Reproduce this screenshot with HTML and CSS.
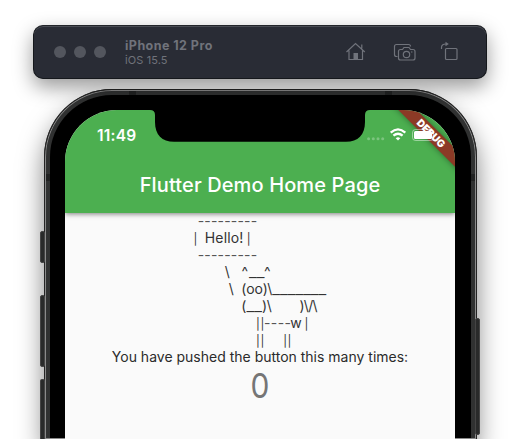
FILE: index.html
```html
<!DOCTYPE html>
<html lang="en">
<head>
<meta charset="utf-8">
<title>iPhone 12 Pro</title>
<link rel="stylesheet" href="styles.css">
</head>
<body>
<header class="toolbar">
  <div class="dots"><i></i><i></i><i></i></div>
  <div class="device"><strong>iPhone 12 Pro</strong><span>iOS 15.5</span></div>
  <svg class="tools" width="116" height="24" viewBox="344 38 116 24">
    <path d="M346.5 51 L355.5 42.5 L364.8 51 M349 49.5 V58.5 H362.5 V49.5 M361.8 47.5 V43.5"/>
    <path class="solid" d="M353.5 58.5v-6.5h4.5v6.5z"/>
    <path d="M397.5 55.5h-1a2 2 0 0 1-2-2v-8a2 2 0 0 1 2-2h12a2 2 0 0 1 2 2"/>
    <path d="M400.5 48.5h2l1.5-2h5l1.500 2h2.500a2 2 0 0 1 2 2v6.500a2 2 0 0 1-2 2h-12.500a2 2 0 0 1-2-2v-6.500a2 2 0 0 1 2-2z"/>
    <circle cx="406.500" cy="53.500" r="3.200"/>
    <circle class="solid" cx="411.800" cy="51" r=".7"/>
    <rect x="445.500" y="47.500" width="11.500" height="11" rx="1"/>
    <path d="M441.500 48v-1.500q0-3.500 4.500-3.500"/>
    <path class="solid" d="M445.500 40.800l3.300 2.200-3.300 2.200z"/>
  </svg>
</header>
<main class="phone">
  <i class="key mute"></i><i class="key up"></i><i class="key down"></i><i class="key power"></i>
  <i class="band top-left"></i><i class="band top-right"></i><i class="band side-left"></i><i class="band side-right"></i>
  <div class="screen">
    <div class="appbar">
      <div class="status">
        <span class="time">11:49</span>
        <svg width="70" height="16" viewBox="366 127 70 16">
          <g fill="#7cc47f"><circle cx="368.600" cy="138.700" r="1.500"/><circle cx="373.300" cy="138.700" r="1.500"/><circle cx="378" cy="138.700" r="1.500"/><circle cx="382.700" cy="138.700" r="1.500"/></g>
          <g fill="none" stroke="#fff" stroke-width="2.300"><path d="M390.700 132.700q7.300-6.600 14.600 0"/><path d="M393.400 135.700q4.600-4 9.200 0"/></g>
          <path fill="#fff" d="M395.700 138.200q2.300-1.900 4.600 0L398 140.500z"/>
          <rect x="412.500" y="129.500" width="21" height="11" rx="3" fill="none" stroke="#fff" stroke-opacity=".45"/>
          <rect x="414" y="131" width="18" height="8" rx="1.500" fill="#fff"/>
        </svg>
      </div>
      <h1>Flutter Demo Home Page</h1>
    </div>
    <svg class="cow" width="390" height="135" viewBox="65 213 390 135">
      <g class="dash">
        <text x="197.700" y="226" textLength="59.500">---------</text>
        <text x="197.700" y="260" textLength="59.500">---------</text>
        <text x="264" y="328" textLength="27">----</text>
      </g>
      <text x="204.800" y="243" textLength="38.500">Hello!</text>
      <text x="241.500" y="277">^</text><text x="249" y="277" textLength="15.500" lengthAdjust="spacingAndGlyphs">__</text><text x="264" y="277">^</text>
      <text x="241.300" y="294" textLength="26.500">(oo)</text><text x="272.300" y="294" textLength="54" lengthAdjust="spacingAndGlyphs">_______</text>
      <text x="241.300" y="311">(</text><text x="246.500" y="311" textLength="15.500" lengthAdjust="spacingAndGlyphs">__</text><text x="262" y="311">)</text><text x="299.500" y="311" textLength="18">)\/\</text>
      <text x="290.300" y="328">w</text>
      <text x="224.800" y="277">\</text><text x="228.800" y="294">\</text><text x="267.300" y="294">\</text><text x="266.800" y="311">\</text>
      <g class="bar">
        <text x="195.300" y="242.500">|</text><text x="248.700" y="242.500">|</text>
        <text x="258" y="327.500">|</text><text x="262.300" y="327.500">|</text><text x="306.500" y="327.500">|</text>
        <text x="258" y="344.500">|</text><text x="262.300" y="344.500">|</text><text x="285.100" y="344.500">|</text><text x="289.400" y="344.500">|</text>
      </g>
    </svg>
    <p class="caption">You have pushed the button this many times:</p>
    <p class="count">0</p>
    <div class="ribbon">DEBUG</div>
  </div>
  <svg class="notch" width="220" height="33" viewBox="150 109 220 33"><path d="M150 109V110Q155 110 155 115V122C155 135 162 141.700 174 141.700H346C358 141.700 365 135 365 122V115Q365 110 370 110V109z"/></svg>
</main>
</body>
</html>
```
FILE: styles.css
```css
* { box-sizing: border-box; }
html, body { height: 100%; }
body {
  margin: 0;
  padding-top: 25px;
  overflow: hidden;
  background: #fff;
  font-family: Inter, "Liberation Sans", sans-serif;
}
.toolbar {
  position: relative;
  z-index: 2;
  display: flex;
  align-items: center;
  width: 454px;
  height: 54px;
  margin-left: 33px;
  padding: 0 26px 0 20px;
  border: 1px solid #15181c;
  border-top-color: #22252a;
  border-radius: 10px;
  background: #292c35;
  box-shadow: inset 0 1px #4a4d54, 0 8px 20px rgba(0, 0, 0, .4);
  color: #70737b;
}
.dots { display: flex; gap: 8px; width: 71px; }
.dots i { width: 12px; height: 12px; border-radius: 50%; background: #53565e; }
.device { display: flex; flex-direction: column; flex: 1; }
.device strong { font-size: 12.500px; line-height: 15px; letter-spacing: .45px; }
.device span { font-size: 11px; line-height: 14px; letter-spacing: .1px; }
.tools { position: relative; top: -1px; fill: none; stroke: #70737b; stroke-width: 1.200; }
.tools .solid { fill: #70737b; stroke: none; }
.phone {
  position: relative;
  width: 433px;
  height: 350px;
  margin: 10px 0 0 44px;
  padding: 15px 15px 0;
  border: 6px solid #303131;
  border-bottom: 0;
  border-radius: 68px 68px 0 0;
  background: #000;
  box-shadow: 0 14px 26px rgba(0, 0, 0, .5);
}
.phone::before {
  content: "";
  position: absolute;
  inset: -6px -6px 0;
  border: 1px solid #242424;
  border-bottom: 0;
  border-radius: 68px 68px 0 0;
  box-shadow: inset 0 0 0 1px #8a8a8a;
}
.screen {
  position: relative;
  width: 390px;
  height: 329px;
  overflow: hidden;
  border-radius: 52px 52px 0 0;
  background: #fafafa;
}
.appbar {
  height: 103px;
  background: #4caf50;
  box-shadow: 0 1px 5px rgba(0, 0, 0, .5);
  color: #fff;
}
.status {
  display: flex;
  justify-content: space-between;
  height: 47px;
  padding: 17px 19px 0 32px;
}
.status svg { position: relative; z-index: 1; }
.time { font-size: 15.500px; font-weight: 600; line-height: 17px; letter-spacing: .2px; }
h1 {
  margin: 0;
  font-size: 20px;
  font-weight: 500;
  line-height: 56px;
  letter-spacing: .12px;
  text-align: center;
}
.cow { display: block; fill: #333; font-size: 14px; }
.dash { fill: #555; }
.bar { font-size: 11.500px; text-anchor: middle; }
.caption, .count { margin: 0; text-align: center; }
.caption { color: #2b2b2b; font-size: 14px; line-height: 17px; }
.count { color: #757575; font-size: 34px; font-weight: 400; line-height: 42px; transform: scaleX(.88); }
.ribbon {
  position: absolute;
  top: 17px;
  right: -31px;
  width: 110px;
  height: 13px;
  background: #8c3a26;
  box-shadow: 0 0 6px rgba(0, 0, 0, .4);
  color: #fff;
  font-size: 10.200px;
  font-weight: 900;
  line-height: 13px;
  text-align: center;
  transform: rotate(45deg);
}
.notch { position: absolute; left: 100px; top: 14px; }
.key { position: absolute; width: 5px; background: #292a2a; border: 1px solid #444; border-radius: 2px; }
.mute { left: -10px; top: 136px; height: 32px; }
.up { left: -10px; top: 200px; height: 72px; }
.down { left: -10px; top: 284px; height: 60px; border-bottom: 0; border-radius: 2px 2px 0 0; }
.power { right: -9px; top: 223px; height: 117px; }
.band { position: absolute; width: 7px; height: 4px; background: #202121; }
.top-left { left: 79px; top: -4px; }
.top-right { right: 79px; top: -4px; }
.side-left, .side-right { top: 79px; width: 4px; height: 7px; }
.side-left { left: -4px; }
.side-right { right: -4px; }
```
